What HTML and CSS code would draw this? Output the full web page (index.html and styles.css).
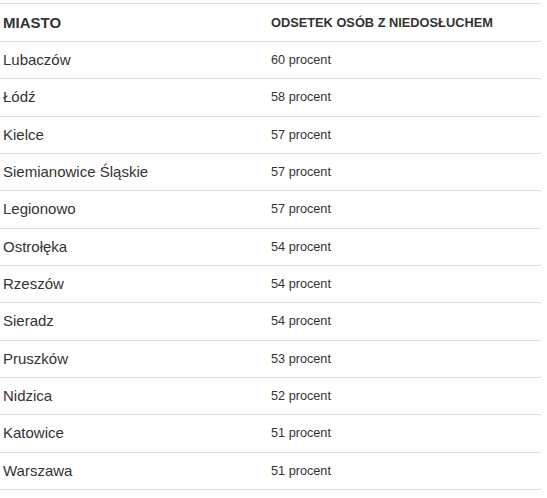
FILE: index.html
```html
<!DOCTYPE html>
<html lang="pl">
<head>
<meta charset="utf-8">
<link rel="stylesheet" href="styles.css">
</head>
<body>
<table class="tbl">
  <thead>
    <tr><th class="c1">MIASTO</th><th class="c2">ODSETEK OSÓB Z NIEDOSŁUCHEM</th></tr>
  </thead>
  <tbody>
    <tr><td class="c1">Lubaczów</td><td class="c2">60 procent</td></tr>
    <tr><td class="c1">Łódź</td><td class="c2">58 procent</td></tr>
    <tr><td class="c1">Kielce</td><td class="c2">57 procent</td></tr>
    <tr><td class="c1">Siemianowice Śląskie</td><td class="c2">57 procent</td></tr>
    <tr><td class="c1">Legionowo</td><td class="c2">57 procent</td></tr>
    <tr><td class="c1">Ostrołęka</td><td class="c2">54 procent</td></tr>
    <tr><td class="c1">Rzeszów</td><td class="c2">54 procent</td></tr>
    <tr><td class="c1">Sieradz</td><td class="c2">54 procent</td></tr>
    <tr><td class="c1">Pruszków</td><td class="c2">53 procent</td></tr>
    <tr><td class="c1">Nidzica</td><td class="c2">52 procent</td></tr>
    <tr><td class="c1">Katowice</td><td class="c2">51 procent</td></tr>
    <tr><td class="c1">Warszawa</td><td class="c2">51 procent</td></tr>
  </tbody>
</table>
</body>
</html>
```
FILE: styles.css
```css
html, body {
  margin: 0;
  padding: 0;
  background: #fff;
}
body {
  padding-top: 3px;
  font-family: "Liberation Sans", Arial, sans-serif;
  color: #333;
}
.tbl {
  width: 541px;
  border-collapse: collapse;
  table-layout: fixed;
}
.tbl th, .tbl td {
  border-top: 1px solid #ddd;
  padding-left: 3px;
  padding-right: 3px;
  text-align: left;
  vertical-align: middle;
}
.tbl tbody tr:last-child td {
  border-bottom: 1px solid #ddd;
}
.tbl th {
  line-height: 21px;
  padding-top: 8px;
  padding-bottom: 8px;
}
.tbl td {
  line-height: 20.33px;
  padding-top: 8px;
  padding-bottom: 8px;
}
.tbl .c1 {
  width: 262px;
  font-size: 15px;
}
.tbl td.c2 {
  font-size: 12.7px;
}
.tbl th.c1 {
  font-weight: bold;
  font-size: 15px;
}
.tbl th.c2 {
  font-weight: bold;
  font-size: 12.8px;
  color: #333;
}
```
